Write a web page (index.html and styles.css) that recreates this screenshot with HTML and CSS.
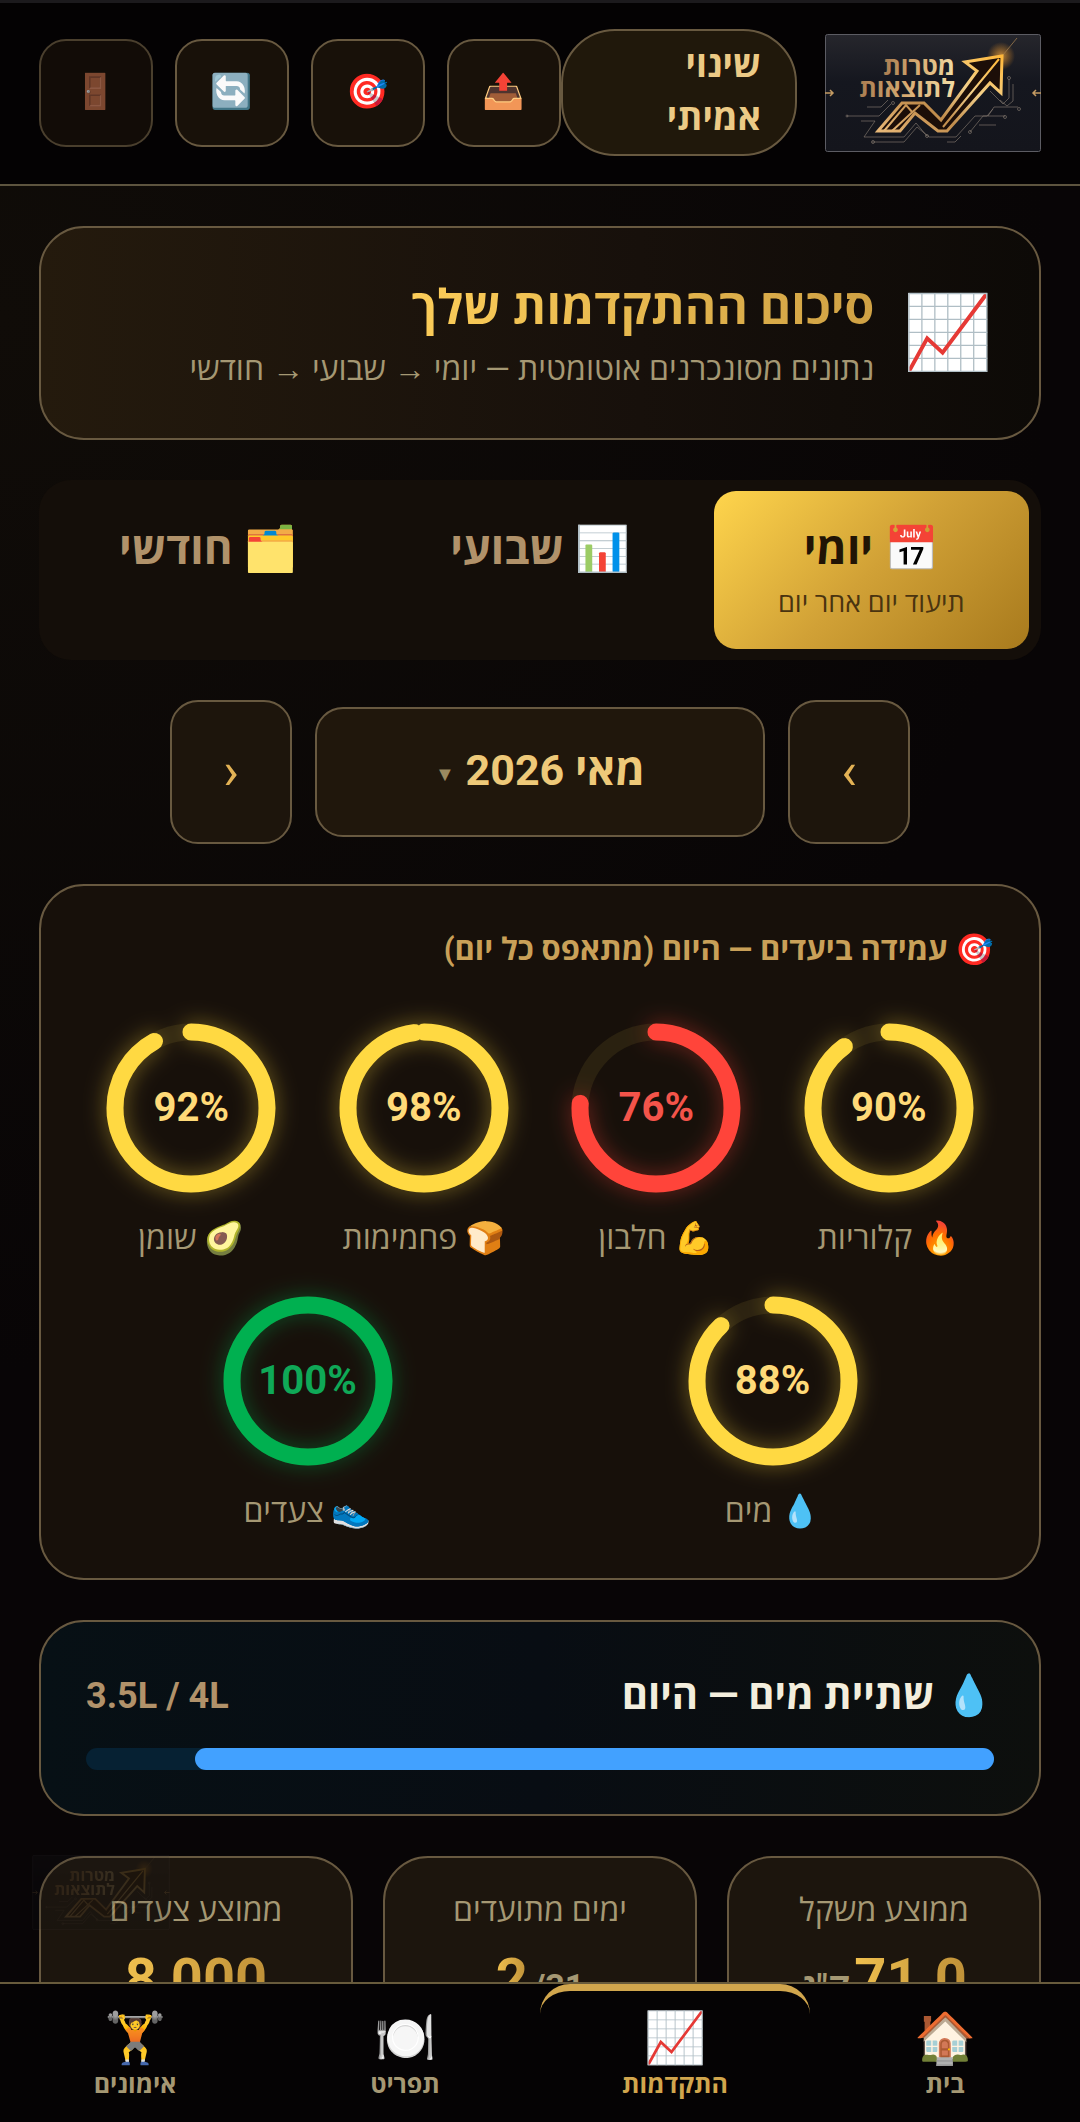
FILE: index.html
```html
<!DOCTYPE html>
<html lang="he" dir="rtl">
<head>
<meta charset="utf-8">
<meta name="viewport" content="width=device-width, initial-scale=1">
<title>סיכום ההתקדמות שלך</title>
<link rel="stylesheet" href="styles.css">
</head>
<body>
<svg class="defs" aria-hidden="true">
  <defs>
    <linearGradient id="gold" x1="0" y1="1" x2="1" y2="0">
      <stop offset="0" stop-color="#e8b878"/>
      <stop offset="0.35" stop-color="#c08c4c"/>
      <stop offset="0.65" stop-color="#f3d08a"/>
      <stop offset="1" stop-color="#ffb83a"/>
    </linearGradient>
    <linearGradient id="goldText" x1="0" y1="0" x2="1" y2="0">
      <stop offset="0" stop-color="#a87c50"/>
      <stop offset="0.5" stop-color="#d9ad74"/>
      <stop offset="1" stop-color="#f2dca4"/>
    </linearGradient>
    <linearGradient id="plate" x1="0" y1="0" x2="0" y2="1">
      <stop offset="0" stop-color="#26262c"/>
      <stop offset="0.4" stop-color="#15171f"/>
      <stop offset="1" stop-color="#14151c"/>
    </linearGradient>
    <radialGradient id="spark">
      <stop offset="0" stop-color="#ffb040" stop-opacity="0.7"/>
      <stop offset="1" stop-color="#ff9a20" stop-opacity="0"/>
    </radialGradient>
    <symbol id="logo" viewBox="0 0 216 118">
      <rect x="0.5" y="0.5" width="215" height="117" rx="2" fill="url(#plate)" stroke="#5c5c63"/>
      <g fill="none" stroke="#8d8175" stroke-width="0.6">
        <path d="M22 82H54L66 70M36 87H50L39 103H79L91 89L102 102M47 108H79L92 93L104 103H131L150 82H162L168 75M145 98L158 82H180M163 82L169 73H193M184 45V64L178 70L165 57M188 50V67L182 72L175 66M154 91H171M122 108H130L136 102M42 73H56L63 66"/>
        <circle cx="68" cy="69" r="1.5"/><circle cx="22" cy="82" r="1"/><circle cx="180" cy="83" r="1.5"/><circle cx="194" cy="75" r="1.5"/><circle cx="145" cy="98" r="1.5"/><circle cx="184" cy="44" r="1.5"/><circle cx="48" cy="108" r="1.5"/><circle cx="102" cy="102" r="1.5"/>
      </g>
      <g fill="none" stroke="#c39a62" stroke-width="1.5">
        <path d="M0 59H8M5 56L8 59L5 62M216 59H208M211 56L208 59L211 62"/>
      </g>
      <circle cx="176" cy="22" r="14" fill="url(#spark)"/>
      <path d="M178 21L192 4" stroke="#9c7a4c" stroke-width="0.8"/>
      <path d="M177 22L140 28L152 37L116 86L99 69H77L53 97H75L90 79L113 97H122L165 49L176 59Z" fill="#1c0e08" stroke="url(#gold)" stroke-width="3"/>
      <path d="M174 25L118 93M59 97L81 71L88 79M67 97L95 71" fill="none" stroke="url(#gold)" stroke-width="2"/>
      <g fill="url(#goldText)" class="logo-text">
        <text x="130" y="41">מטרות</text>
        <text x="130" y="63">לתוצאות</text>
      </g>
    </symbol>
  </defs>
</svg>

<div class="app">
  <header class="topbar">
    <svg class="logo" role="img" aria-label="מטרות לתוצאות"><use href="#logo"/></svg>
    <button class="pill">שינוי<br>אמיתי</button>
    <div class="tools">
      <button class="tool" aria-label="שיתוף">📤</button>
      <button class="tool" aria-label="יעדים">🎯</button>
      <button class="tool" aria-label="רענון">🔄</button>
      <button class="tool tool-muted" aria-label="יציאה">🚪</button>
    </div>
  </header>

  <main class="content">
    <section class="card hero">
      <span class="hero-icon">📈</span>
      <div>
        <h1 class="hero-title">סיכום ההתקדמות שלך</h1>
        <p class="hero-sub">נתונים מסונכרנים אוטומטית — יומי → שבועי → חודשי</p>
      </div>
    </section>

    <div class="tabs" role="tablist">
      <button class="tab tab-active" role="tab" aria-selected="true"><span>📅 יומי</span><small>תיעוד יום אחר יום</small></button>
      <button class="tab" role="tab" aria-selected="false"><span>📊 שבועי</span></button>
      <button class="tab" role="tab" aria-selected="false"><span>🗂️ חודשי</span></button>
    </div>

    <div class="months">
      <button class="step" aria-label="החודש הקודם">›</button>
      <button class="month">מאי 2026 <span class="caret">▼</span></button>
      <button class="step" aria-label="החודש הבא">‹</button>
    </div>

    <section class="card goals">
      <h2 class="goals-title">🎯 עמידה ביעדים — היום (מתאפס כל יום)</h2>
      <ul class="rings">
        <li class="ring yellow">
          <div class="dial"><svg viewBox="0 0 170 170"><circle class="track" cx="85" cy="85" r="76"/><circle class="arc" cx="85" cy="85" r="76" pathLength="100" stroke-dasharray="90 100"/></svg><strong>90%</strong></div>
          <span>🔥 קלוריות</span>
        </li>
        <li class="ring red">
          <div class="dial"><svg viewBox="0 0 170 170"><circle class="track" cx="85" cy="85" r="76"/><circle class="arc" cx="85" cy="85" r="76" pathLength="100" stroke-dasharray="76 100"/></svg><strong>76%</strong></div>
          <span>💪 חלבון</span>
        </li>
        <li class="ring yellow">
          <div class="dial"><svg viewBox="0 0 170 170"><circle class="track" cx="85" cy="85" r="76"/><circle class="arc" cx="85" cy="85" r="76" pathLength="100" stroke-dasharray="98 100"/></svg><strong>98%</strong></div>
          <span>🍞 פחמימות</span>
        </li>
        <li class="ring yellow">
          <div class="dial"><svg viewBox="0 0 170 170"><circle class="track" cx="85" cy="85" r="76"/><circle class="arc" cx="85" cy="85" r="76" pathLength="100" stroke-dasharray="92 100"/></svg><strong>92%</strong></div>
          <span>🥑 שומן</span>
        </li>
        <li class="ring yellow">
          <div class="dial"><svg viewBox="0 0 170 170"><circle class="track" cx="85" cy="85" r="76"/><circle class="arc" cx="85" cy="85" r="76" pathLength="100" stroke-dasharray="88 100"/></svg><strong>88%</strong></div>
          <span>💧 מים</span>
        </li>
        <li class="ring green">
          <div class="dial"><svg viewBox="0 0 170 170"><circle class="track" cx="85" cy="85" r="76"/><circle class="arc" cx="85" cy="85" r="76" pathLength="100" stroke-dasharray="100 100"/></svg><strong>100%</strong></div>
          <span>👟 צעדים</span>
        </li>
      </ul>
    </section>

    <section class="card water">
      <div class="water-head">
        <h2 class="water-title">💧 שתיית מים — היום</h2>
        <span class="water-amount" dir="ltr">3.5L / 4L</span>
      </div>
      <div class="bar"><div class="bar-fill" style="width:88%"></div></div>
    </section>

    <div class="stats">
      <section class="card stat"><span>ממוצע משקל</span><p><b>71.0</b> <small>ק"ג</small></p></section>
      <section class="card stat"><span>ימים מתועדים</span><p dir="ltr"><b>2</b> <small>/31</small></p></section>
      <section class="card stat"><span>ממוצע צעדים</span><p><b>8,000</b></p></section>
    </div>
  </main>

  <svg class="watermark" aria-hidden="true"><use href="#logo"/></svg>

  <nav class="bottom">
    <a href="#home"><span class="nav-icon">🏠</span>בית</a>
    <a href="#progress" class="current" aria-current="page"><span class="nav-icon">📈</span>התקדמות</a>
    <a href="#menu"><span class="nav-icon">🍽️</span>תפריט</a>
    <a href="#training"><span class="nav-icon">🏋️</span>אימונים</a>
  </nav>
</div>
</body>
</html>
```
FILE: styles.css
```css
:root {
  --line: #685940;
  --muted: #a59873;
  --gold: #d1a64d;
  --page: #080506;
}

* { box-sizing: border-box; }

html, body { height: 100%; }

body {
  margin: 0;
  color: var(--muted);
  background: var(--page);
  font-family: Roboto, "Open Sans", "Noto Color Emoji", sans-serif;
  line-height: 48px;
}

h1, h2, p, ul { margin: 0; padding: 0; }

button {
  margin: 0;
  padding: 0;
  border: 0;
  background: none;
  color: inherit;
  font: inherit;
}

.defs { position: absolute; width: 0; height: 0; }

.app {
  position: relative;
  display: flex;
  flex-direction: column;
  height: 100vh;
  overflow: hidden;
  background: radial-gradient(circle at 0 15%, #100c08, transparent 50%), var(--page);
}

/* Top bar */
.topbar {
  flex: none;
  display: flex;
  align-items: center;
  padding: 26px 39px 28px;
  border-top: 3px solid #1c1a1d;
  border-bottom: 2px solid #5d543f;
  background: #040203;
}

.logo { flex: none; width: 216px; height: 118px; }

.logo-text {
  direction: ltr;
  font: 700 25px Roboto, "Open Sans", sans-serif;
  text-anchor: end;
}

.pill {
  flex: 1;
  margin-right: 28px;
  padding: 8px 34px 9px;
  border: 2px solid var(--line);
  border-radius: 54px;
  background: #20180b;
  color: #ecca86;
  font-size: 36px;
  font-weight: 700;
  line-height: 53px;
  text-align: right;
}

.tools { flex: none; display: flex; gap: 22px; }

.tool {
  width: 114px;
  height: 108px;
  padding-bottom: 4px;
  border: 2px solid var(--line);
  border-radius: 27px;
  background: #181109;
  font-size: 34px;
}

.tool-muted { opacity: 0.7; }

/* Scrolling content */
.content {
  flex: 1;
  min-height: 0;
  display: flex;
  flex-direction: column;
  gap: 40px;
  padding: 40px 39px 0;
  overflow: hidden;
}

.content > * { flex: none; }

.card {
  border: 2px solid var(--line);
  border-radius: 45px;
  background: #17100a;
}

.hero {
  display: flex;
  align-items: center;
  gap: 29px;
  padding: 44px 46px;
  background: linear-gradient(to left, #0d0a07, #17100b 40%, #241a0d);
}

.hero-icon { font-size: 72px; line-height: 120px; }

.hero-title {
  width: fit-content;
  background: linear-gradient(to left, #cfa144, #fccd59);
  background-clip: text;
  color: transparent;
  font-size: 48px;
  font-weight: 700;
  line-height: 72px;
}

.hero-sub { font-size: 32px; line-height: 50px; }

/* Tabs */
.tabs {
  display: grid;
  grid-template-columns: repeat(3, 1fr);
  gap: 16px;
  padding: 11px 12px;
  border-radius: 32px;
  background: #140e09;
}

.tab {
  display: flex;
  flex-direction: column;
  align-items: center;
  min-height: 158px;
  padding-top: 31px;
  border-radius: 22px;
  color: #b1926a;
  font-size: 44px;
  font-weight: 700;
  line-height: 54px;
}

.tab small { font-size: 27px; font-weight: 400; color: #4a3410; }

.tab-active {
  background: linear-gradient(135deg, #ffd54c, #d1a136 50%, #a87a1d);
  color: #211405;
}

/* Month picker */
.months {
  display: flex;
  align-items: center;
  justify-content: center;
  gap: 23px;
}

.step, .month {
  border: 2px solid var(--line);
  border-radius: 28px;
  background: #1d150c;
}

.step {
  width: 122px;
  height: 144px;
  color: #e3b255;
  font-size: 52px;
}

.month {
  width: 450px;
  height: 130px;
  background: #20170c;
  color: #eec979;
  font-size: 43px;
  font-weight: 700;
}

.caret {
  color: #9a8a60;
  font-size: 20px;
  vertical-align: middle;
}

/* Daily goals */
.goals { padding: 40px 34px 43px; }

.goals-title {
  padding-right: 11px;
  color: #c9a058;
  font-size: 31px;
  font-weight: 700;
}

.rings {
  display: flex;
  flex-wrap: wrap;
  justify-content: space-around;
  row-gap: 34px;
  padding-top: 49px;
  list-style: none;
}

.ring {
  display: flex;
  flex-direction: column;
  align-items: center;
  gap: 21px;
  width: 200px;
  font-size: 32px;
}

.dial {
  display: grid;
  place-items: center;
  width: 170px;
  height: 170px;
}

.dial > * { grid-area: 1 / 1; }
.dial svg { width: 100%; height: 100%; overflow: visible; }
.dial strong { color: var(--tone-text); font-size: 40px; font-weight: 700; }

.track, .arc { fill: none; stroke-width: 17; }
.track { stroke: #2a2110; }

.arc {
  stroke: var(--tone);
  stroke-linecap: round;
  transform: rotate(-90deg);
  transform-origin: center;
  filter: drop-shadow(0 0 11px var(--glow));
}

.yellow { --tone: #ffd942; --tone-text: #ffda78; --glow: rgba(255, 217, 66, 0.4); }
.red { --tone: #ff443a; --tone-text: #f4544a; --glow: rgba(255, 68, 58, 0.4); }
.green { --tone: #00b050; --tone-text: #0fa857; --glow: rgba(0, 176, 80, 0.4); }

/* Water */
.water {
  padding: 44px 45px;
  background: linear-gradient(to left, #0d0f0d, #080d13 50%, #071015);
}

.water-head {
  display: flex;
  align-items: center;
  justify-content: space-between;
  line-height: 60px;
}

.water-title { color: #f3eedd; font-size: 40px; font-weight: 700; }
.water-amount { color: #b1926a; font-size: 36px; font-weight: 700; }

.bar {
  height: 22px;
  margin-top: 22px;
  border-radius: 11px;
  background: #062133;
}

.bar-fill { height: 100%; border-radius: 11px; background: #42a1ff; }

/* Averages */
.stats {
  display: grid;
  grid-template-columns: repeat(3, 1fr);
  gap: 30px;
}

.stat {
  padding: 28px 20px;
  background: #1c150d;
  font-size: 32px;
  text-align: center;
}

.stat p { font-size: 20px; line-height: 90px; }

.stat b {
  background: linear-gradient(to left, #be9038, #f0c04e);
  background-clip: text;
  color: transparent;
  font-size: 56px;
}

.stat small { font-size: 34px; font-weight: 700; }

.watermark {
  position: absolute;
  bottom: 192px;
  left: 32px;
  width: 138px;
  height: 75px;
  opacity: 0.13;
}

/* Bottom navigation */
.bottom {
  flex: none;
  display: grid;
  grid-template-columns: repeat(4, 1fr);
  height: 140px;
  border-top: 2px solid #685b3c;
  background: #050304;
}

.bottom a {
  display: flex;
  flex-direction: column;
  align-items: center;
  padding-top: 16px;
  border-top: 7px solid transparent;
  border-radius: 30px 30px 0 0;
  color: var(--muted);
  font-size: 25px;
  font-weight: 700;
  line-height: 32px;
  text-decoration: none;
}

.bottom .current { border-top-color: var(--gold); color: var(--gold); }

.nav-icon { font-size: 50px; line-height: 62px; }
```
